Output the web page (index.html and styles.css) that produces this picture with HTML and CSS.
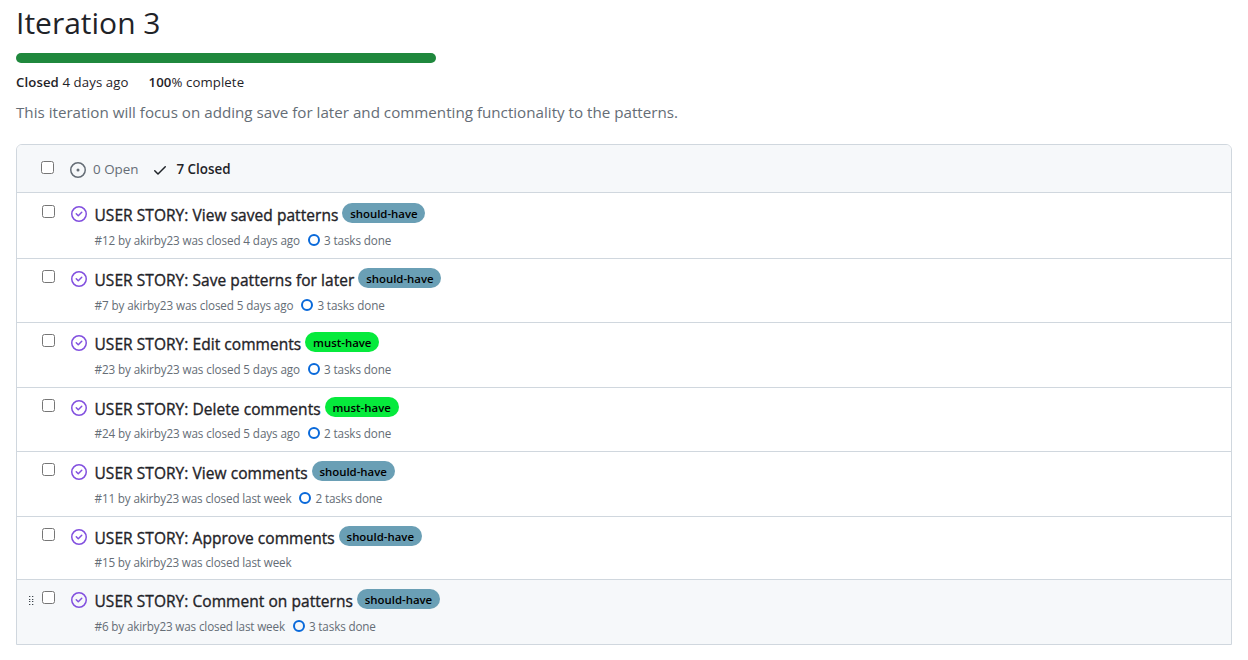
FILE: index.html
```html
<!DOCTYPE html>
<html lang="en">
<head>
<meta charset="utf-8">
<title>Iteration 3</title>
<link rel="stylesheet" href="styles.css">
</head>
<body>
<svg class="sprite" aria-hidden="true">
  <symbol id="done" viewBox="0 0 16 16"><path d="M11.28 6.78a.75.75 0 0 0-1.06-1.06L7.25 8.69 5.78 7.22a.75.75 0 0 0-1.06 1.06l2 2a.75.75 0 0 0 1.06 0l3.5-3.5Z"/><path d="M16 8A8 8 0 1 1 0 8a8 8 0 0 1 16 0Zm-1.5 0a6.5 6.5 0 1 0-13 0 6.5 6.5 0 0 0 13 0Z"/></symbol>
  <symbol id="open" viewBox="0 0 16 16"><path d="M8 9.5a1.5 1.5 0 1 0 0-3 1.5 1.5 0 0 0 0 3Z"/><path d="M8 0a8 8 0 1 1 0 16A8 8 0 0 1 8 0ZM1.5 8a6.5 6.5 0 1 0 13 0 6.5 6.5 0 0 0-13 0Z"/></symbol>
  <symbol id="check" viewBox="0 0 16 16"><path d="M13.78 4.22a.75.75 0 0 1 0 1.06l-7.25 7.25a.75.75 0 0 1-1.06 0L2.22 9.28a.75.75 0 0 1 1.06-1.06L6 10.94l6.72-6.72a.75.75 0 0 1 1.06 0Z"/></symbol>
</svg>
<main class="milestone">
  <h1 class="title">Iteration 3</h1>
  <div class="progress"></div>
  <div class="stats"><span><b>Closed</b> 4 days ago</span><span><b>100</b>% complete</span></div>
  <p class="description">This iteration will focus on adding save for later and commenting functionality to the patterns.</p>
  <section class="box">
    <header class="box-header">
      <input type="checkbox" class="check">
      <svg class="icon icon-open"><use href="#open"/></svg><span class="tab">0 Open</span>
      <svg class="icon icon-check"><use href="#check"/></svg><span class="tab tab-active">7 Closed</span>
    </header>
    <ul class="list">
      <li class="row"><span class="grip"></span><input type="checkbox" class="check"><svg class="icon icon-done"><use href="#done"/></svg>
        <div class="content"><div class="heading"><a class="name">USER STORY: View saved patterns</a><span class="label should">should-have</span></div>
        <div class="meta"><span>#12 by akirby23 was closed 4 days ago</span><i class="ring"></i><span>3 tasks done</span></div></div></li>
      <li class="row"><span class="grip"></span><input type="checkbox" class="check"><svg class="icon icon-done"><use href="#done"/></svg>
        <div class="content"><div class="heading"><a class="name">USER STORY: Save patterns for later</a><span class="label should">should-have</span></div>
        <div class="meta"><span>#7 by akirby23 was closed 5 days ago</span><i class="ring"></i><span>3 tasks done</span></div></div></li>
      <li class="row"><span class="grip"></span><input type="checkbox" class="check"><svg class="icon icon-done"><use href="#done"/></svg>
        <div class="content"><div class="heading"><a class="name">USER STORY: Edit comments</a><span class="label must">must-have</span></div>
        <div class="meta"><span>#23 by akirby23 was closed 5 days ago</span><i class="ring"></i><span>3 tasks done</span></div></div></li>
      <li class="row"><span class="grip"></span><input type="checkbox" class="check"><svg class="icon icon-done"><use href="#done"/></svg>
        <div class="content"><div class="heading"><a class="name">USER STORY: Delete comments</a><span class="label must">must-have</span></div>
        <div class="meta"><span>#24 by akirby23 was closed 5 days ago</span><i class="ring"></i><span>2 tasks done</span></div></div></li>
      <li class="row"><span class="grip"></span><input type="checkbox" class="check"><svg class="icon icon-done"><use href="#done"/></svg>
        <div class="content"><div class="heading"><a class="name">USER STORY: View comments</a><span class="label should">should-have</span></div>
        <div class="meta meta-week"><span>#11 by akirby23 was closed last week</span><i class="ring"></i><span>2 tasks done</span></div></div></li>
      <li class="row row-short"><span class="grip"></span><input type="checkbox" class="check"><svg class="icon icon-done"><use href="#done"/></svg>
        <div class="content"><div class="heading"><a class="name">USER STORY: Approve comments</a><span class="label should">should-have</span></div>
        <div class="meta meta-week"><span>#15 by akirby23 was closed last week</span></div></div></li>
      <li class="row row-hover"><span class="grip"><svg class="dots" viewBox="0 0 5 9"><path d="M0 0h1.3v1H0zM3 0h1.3v1H3zM0 3h1.3v1H0zM3 3h1.3v1H3zM0 5h1.3v1H0zM3 5h1.3v1H3zM0 8h1.3v1H0zM3 8h1.3v1H3z"/></svg></span><input type="checkbox" class="check"><svg class="icon icon-done"><use href="#done"/></svg>
        <div class="content"><div class="heading"><a class="name">USER STORY: Comment on patterns</a><span class="label should">should-have</span></div>
        <div class="meta meta-week"><span>#6 by akirby23 was closed last week</span><i class="ring"></i><span>3 tasks done</span></div></div></li>
    </ul>
  </section>
</main>
</body>
</html>
```
FILE: styles.css
```css
* { box-sizing: border-box; }
body { margin: 0; background: #fff; color: #1f2328; font-family: "Open Sans", sans-serif; }
.sprite { display: none; }
.milestone { padding: 0 16px; }
.title { margin: 0; padding-top: 2px; height: 53px; font-size: 30px; line-height: 42px; font-weight: 400; }
.progress { width: 420px; height: 10px; border-radius: 6px; background: #1f883d; }
.stats { display: flex; gap: 20px; margin-top: 9px; font-size: 13.2px; line-height: 21px; letter-spacing: 0.1px; }
.stats b { font-weight: 600; }
.description { margin: 7px 0 0; height: 44px; font-size: 15.18px; line-height: 24px; color: #656d76; }
.box { border: 1px solid #d0d7de; border-radius: 6px 6px 0 0; overflow: hidden; }
.box-header { display: flex; align-items: center; height: 48px; padding-left: 24px; background: #f6f8fa; border-bottom: 1px solid #d0d7de; }
.check { flex: none; width: 13px; height: 13px; margin: 0; }
.box-header .check { margin-top: -3px; }
.icon { flex: none; width: 16px; height: 16px; fill: currentColor; }
.icon-open { margin: 2px 7px 0 16px; color: #656d76; }
.icon-check { margin: 2px 8px 0 14px; }
.tab { font-size: 13.4px; line-height: 20px; color: #656d76; }
.tab-active { color: #1f2328; font-weight: 600; }
.list { margin: 0; padding: 0.45px 0 0; list-style: none; }
.row { display: flex; height: 64.45px; border-top: 1px solid #d0d7de; }
.row:first-child { border-top-color: transparent; }
.row-short { height: 63.5px; }
.row-hover { background: #f6f8fa; }
.grip { flex: none; width: 25px; padding: 16px 0 0 12px; }
.dots { display: block; width: 5px; height: 9px; fill: #3f464d; }
.row .check { margin-top: 11px; }
.icon-done { margin: 12px 7.5px 0 16px; color: #8250df; }
.content { padding-top: 9px; }
.heading { display: flex; gap: 4px; height: 25.7px; }
.name { font-size: 15.5px; line-height: 24px; letter-spacing: 0.05px; -webkit-text-stroke: 0.35px currentColor; white-space: nowrap; }
.label { height: 20px; padding: 0 7.8px; border-radius: 10px; font-size: 11.4px; line-height: 21px; font-weight: 600; color: #000; white-space: nowrap; }
.should { background: #6a9fb5; }
.must { background: #06ea3c; }
.meta { display: flex; height: 24px; font-size: 11.7px; line-height: 22px; letter-spacing: -0.11px; color: #656d76; white-space: nowrap; }
.meta-week { letter-spacing: -0.15px; }
.ring { width: 12px; height: 12px; margin: 5px 4px 0 8px; border: 2px solid #0969da; border-radius: 50%; }
```
